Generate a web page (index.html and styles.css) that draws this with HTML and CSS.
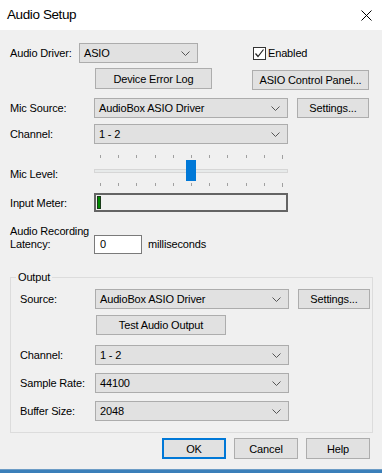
FILE: index.html
```html
<!DOCTYPE html>
<html lang="en">
<head>
    <meta charset="UTF-8">
    <title>Audio Setup</title>
    <link rel="stylesheet" href="styles.css">
</head>
<body>

<div class="dialog">
    <div class="titlebar">
        <span class="title">Audio Setup</span>
        <svg class="close" width="11" height="11" viewBox="0 0 11 11">
            <path d="M0.5 0.5 L10.5 10.5 M10.5 0.5 L0.5 10.5" stroke="#000" stroke-width="1"/>
        </svg>
    </div>

    <div class="content">
        <div class="row row-driver">
            <label class="lbl lbl-short">Audio Driver:</label>
            <div class="select select-short">
                <span>ASIO</span>
                <svg class="chev" width="9" height="5" viewBox="0 0 9 5"><polyline points="0.5,0.5 4.5,4.5 8.5,0.5" fill="none" stroke="#555"/></svg>
            </div>
            <label class="check">
                <span class="box">
                    <svg width="11" height="11" viewBox="0 0 11 11"><polyline points="1.5,5.5 4,8.5 9.5,1.5" fill="none" stroke="#222" stroke-width="1.2"/></svg>
                </span>
                Enabled
            </label>
        </div>

        <div class="row row-log">
            <button class="btn btn-log">Device Error Log</button>
            <button class="btn btn-asio">ASIO Control Panel...</button>
        </div>

        <div class="row row-mic">
            <label class="lbl">Mic Source:</label>
            <div class="select">
                <span>AudioBox ASIO Driver</span>
                <svg class="chev" width="9" height="5" viewBox="0 0 9 5"><polyline points="0.5,0.5 4.5,4.5 8.5,0.5" fill="none" stroke="#555"/></svg>
            </div>
            <button class="btn btn-settings">Settings...</button>
        </div>

        <div class="row row-channel">
            <label class="lbl">Channel:</label>
            <div class="select">
                <span>1 - 2</span>
                <svg class="chev" width="9" height="5" viewBox="0 0 9 5"><polyline points="0.5,0.5 4.5,4.5 8.5,0.5" fill="none" stroke="#555"/></svg>
            </div>
        </div>

        <div class="row row-level">
            <label class="lbl">Mic Level:</label>
            <div class="slider">
                <div class="ticks">
                    <i></i><i></i><i></i><i></i><i></i><i></i><i></i><i></i><i></i><i></i><i class="last"></i>
                </div>
                <div class="track">
                    <div class="thumb"></div>
                </div>
                <div class="ticks">
                    <i></i><i></i><i></i><i></i><i></i><i></i><i></i><i></i><i></i><i></i><i class="last"></i>
                </div>
            </div>
        </div>

        <div class="row row-meter">
            <label class="lbl">Input Meter:</label>
            <div class="meter"><div class="meter-fill"></div></div>
        </div>

        <div class="row row-latency">
            <label class="lbl lbl-two">Audio Recording<br>Latency:</label>
            <div class="textbox">0</div>
            <span class="unit">milliseconds</span>
        </div>

        <fieldset class="group">
            <legend>Output</legend>

            <div class="row row-source">
                <label class="lbl lbl-out">Source:</label>
                <div class="select">
                    <span>AudioBox ASIO Driver</span>
                    <svg class="chev" width="9" height="5" viewBox="0 0 9 5"><polyline points="0.5,0.5 4.5,4.5 8.5,0.5" fill="none" stroke="#555"/></svg>
                </div>
                <button class="btn btn-settings">Settings...</button>
            </div>

            <div class="row row-test">
                <button class="btn btn-test">Test Audio Output</button>
            </div>

            <div class="row row-out-channel">
                <label class="lbl lbl-out">Channel:</label>
                <div class="select">
                    <span>1 - 2</span>
                    <svg class="chev" width="9" height="5" viewBox="0 0 9 5"><polyline points="0.5,0.5 4.5,4.5 8.5,0.5" fill="none" stroke="#555"/></svg>
                </div>
            </div>

            <div class="row row-out-next">
                <label class="lbl lbl-out">Sample Rate:</label>
                <div class="select">
                    <span>44100</span>
                    <svg class="chev" width="9" height="5" viewBox="0 0 9 5"><polyline points="0.5,0.5 4.5,4.5 8.5,0.5" fill="none" stroke="#555"/></svg>
                </div>
            </div>

            <div class="row row-out-next">
                <label class="lbl lbl-out">Buffer Size:</label>
                <div class="select">
                    <span>2048</span>
                    <svg class="chev" width="9" height="5" viewBox="0 0 9 5"><polyline points="0.5,0.5 4.5,4.5 8.5,0.5" fill="none" stroke="#555"/></svg>
                </div>
            </div>
        </fieldset>

        <div class="row row-actions">
            <button class="btn btn-action btn-default">OK</button>
            <button class="btn btn-action">Cancel</button>
            <button class="btn btn-action">Help</button>
        </div>
    </div>

    <div class="bottom-edge"></div>
</div>

</body>
</html>
```

FILE: styles.css
```css
body {
    margin: 0;
    padding: 0;
    font-family: "Liberation Sans", Arial, sans-serif;
    font-size: 11px;
    letter-spacing: -0.15px;
    color: #000;
    background: #f0f0f0;
    overflow: hidden;
}

.dialog {
    width: 382px;
    height: 473px;
    display: flex;
    flex-direction: column;
    background: #f0f0f0;
}

.titlebar {
    height: 30px;
    flex: none;
    background: #fff;
    display: flex;
    align-items: center;
    justify-content: space-between;
    padding: 0 10px 0 7px;
}

.title {
    font-size: 13.5px;
    letter-spacing: -0.4px;
    margin-top: -1px;
}

.close {
    display: block;
}

.content {
    flex: 1;
    padding: 0 0 0 10px;
}

.row {
    display: flex;
    align-items: center;
    height: 20px;
}

.lbl {
    width: 84px;
    flex: none;
    white-space: nowrap;
}

.lbl-short {
    width: 69px;
}

.lbl-out {
    width: 75px;
}

.select {
    box-sizing: border-box;
    width: 194px;
    height: 20px;
    flex: none;
    background: #e1e1e1;
    border: 1px solid #acacac;
    display: flex;
    align-items: center;
    justify-content: space-between;
    padding: 0 7px 0 4px;
    white-space: nowrap;
}

.select-short {
    width: 119px;
}

.chev {
    display: block;
}

.btn {
    box-sizing: border-box;
    height: 20px;
    margin: 0;
    padding: 0;
    font-family: inherit;
    font-size: 11px;
    letter-spacing: -0.15px;
    color: #000;
    background: #e1e1e1;
    border: 1px solid #adadad;
    flex: none;
    white-space: nowrap;
}

.check {
    display: flex;
    align-items: center;
    margin-left: 55px;
}

.check .box {
    box-sizing: border-box;
    width: 13px;
    height: 13px;
    background: #fff;
    border: 1px solid #333;
    margin-right: 2px;
    display: flex;
    align-items: center;
    justify-content: center;
}

.check .box svg {
    display: block;
}

.row-driver {
    margin-top: 13px;
}

.row-log {
    margin-top: 5px;
    height: 22px;
    align-items: flex-start;
}

.btn-log {
    width: 117px;
    height: 21px;
    margin-left: 85px;
}

.btn-asio {
    width: 117px;
    margin-left: 40px;
    margin-top: 2px;
}

.row-mic {
    margin-top: 8px;
}

.btn-settings {
    width: 72px;
    margin-left: 9px;
}

.row-channel {
    margin-top: 6px;
}

.row-level {
    margin-top: 11px;
    height: 32px;
    align-items: flex-start;
}

.row-level .lbl {
    margin-top: 13px;
}

.slider {
    width: 194px;
    display: flex;
    flex-direction: column;
}

.ticks {
    height: 4px;
    display: flex;
    justify-content: space-between;
    padding: 0 5px 0 6px;
}

.ticks i {
    width: 1px;
    height: 3px;
    background: #a0a0a0;
}

.ticks i.last {
    height: 4px;
}

.track {
    position: relative;
    box-sizing: border-box;
    height: 4px;
    margin: 10px 0 10px 0;
    background: #e7eaea;
    border: 1px solid #d6d6d6;
}

.thumb {
    position: absolute;
    left: 91px;
    top: -10px;
    width: 10px;
    height: 21px;
    background: #0078d7;
}

.row-meter {
    margin-top: 6px;
    height: 19px;
}

.meter {
    box-sizing: border-box;
    width: 194px;
    height: 19px;
    border: 2px solid #646464;
    background: #f0f0f0;
    padding: 1px;
}

.meter-fill {
    box-sizing: border-box;
    width: 4px;
    height: 100%;
    background: #008a00;
    border: 1px solid #1a3a1a;
}

.row-latency {
    margin-top: 13px;
    height: 29px;
    align-items: flex-start;
}

.lbl-two {
    line-height: 13px;
}

.textbox {
    box-sizing: border-box;
    width: 48px;
    height: 19px;
    margin-top: 10px;
    background: #fff;
    border: 1px solid #7a7a7a;
    padding: 0 5px;
    line-height: 17px;
}

.unit {
    margin: 10px 0 0 6px;
    line-height: 19px;
}

.group {
    box-sizing: border-box;
    width: 363px;
    margin: 15px 0 0 0;
    padding: 4px 0 11px 9px;
    border: 1px solid #dcdcdc;
}

.group legend {
    padding: 0 2px;
    margin-left: -4px;
    line-height: 16px;
}

.btn-test {
    width: 130px;
    margin-left: 76px;
}

.row-test {
    margin-top: 6px;
}

.row-out-channel {
    margin-top: 10px;
}

.row-out-next {
    margin-top: 8px;
}

.row-actions {
    margin-top: 5px;
    height: 21px;
    justify-content: flex-end;
    gap: 8px;
    padding-right: 12px;
}

.btn-action {
    width: 64px;
    height: 21px;
}

.btn-default {
    border: 2px solid #0078d7;
}

.bottom-edge {
    height: 3px;
    flex: none;
    background: #3b7fb9;
    border-top: 1px solid #6c9cc6;
}
```
